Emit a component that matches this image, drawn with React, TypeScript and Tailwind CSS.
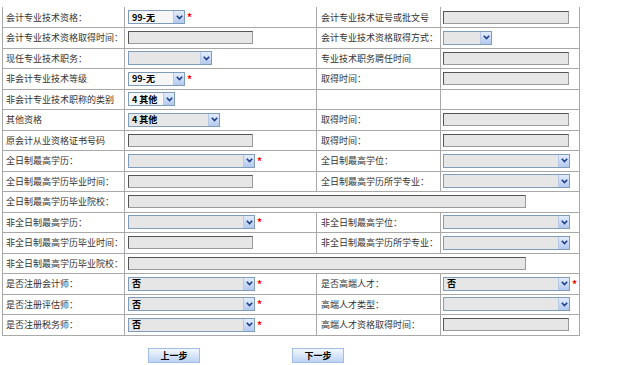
import React from 'react'

const font = { fontFamily: '"Noto Sans CJK SC", "Liberation Sans", sans-serif' }

const Star = () => <span className="ml-[2px] text-[10px] leading-none font-bold text-[#ff0000]">*</span>

const Arrow = () => (
    <span className="flex h-full w-[11px] items-center justify-center border-l border-[#b7c9e6] bg-gradient-to-b from-[#e3ecfb] to-[#b4c9ef]">
        <svg width="7" height="5" viewBox="0 0 7 5">
            <path d="M0.8 0.8 L3.5 3.6 L6.2 0.8" fill="none" stroke="#1d3f8c" strokeWidth="1.6" />
        </svg>
    </span>
)

const Select = ({ w, value, light, star }: { w: string; value?: string; light?: boolean; star?: boolean }) => (
    <div className="flex items-center">
        <div className={`flex h-[14px] items-center justify-between border border-[#7f9db9] ${w} ${light ? 'bg-[#f6f6f6]' : 'bg-[#e6e6e6]'}`}>
            <span className="whitespace-pre pl-[3px] text-[9px] font-bold leading-none text-black">{value}</span>
            <Arrow />
        </div>
        {star && <Star />}
    </div>
)

const Input = ({ w }: { w: string }) => (
    <div className={`h-[13px] border border-[#555] border-r-[#9a9a9a] border-b-[#9a9a9a] bg-[#e6e6e6] ${w}`} />
)

const Label = ({ children, left }: { children?: React.ReactNode; left?: boolean }) => (
    <td className={`h-[20.5px] border border-[#a8a8a8] ${left ? 'pl-[3px]' : 'pl-[4px]'} text-[9px] leading-none text-[#333]`}>
        {children}
    </td>
)

const Field = ({ children, left, span }: { children?: React.ReactNode; left?: boolean; span?: number }) => (
    <td colSpan={span} className={`border border-[#a8a8a8] ${left ? 'pl-[3px]' : 'pl-[2px]'}`}>{children}</td>
)

type Row = [string, React.ReactNode, string?, React.ReactNode?]

const rows: Row[] = [
    ['会计专业技术资格：', <Select w="w-[57px]" value="99-无" light star />, '会计专业技术证号或批文号', <Input w="w-[126px]" />],
    ['会计专业技术资格取得时间：', <Input w="w-[125px]" />, '会计专业技术资格取得方式：', <Select w="w-[49px]" />],
    ['现任专业技术职务：', <Select w="w-[84px]" />, '专业技术职务聘任时间', <Input w="w-[126px]" />],
    ['非会计专业技术等级', <Select w="w-[57px]" value="99-无" light star />, '取得时间：', <Input w="w-[126px]" />],
    ['非会计专业技术职称的类别', <Select w="w-[47px]" value="4 其他" light />, '', null],
    ['其他资格', <Select w="w-[92px]" value="4 其他" />, '取得时间：', <Input w="w-[126px]" />],
    ['原会计从业资格证书号码', <Input w="w-[125px]" />, '取得时间：', <Input w="w-[126px]" />],
    ['全日制最高学历：', <Select w="w-[127px]" star />, '全日制最高学位：', <Select w="w-[127px]" />],
    ['全日制最高学历毕业时间：', <Input w="w-[125px]" />, '全日制最高学历所学专业：', <Select w="w-[127px]" />],
    ['全日制最高学历毕业院校：', <Input w="w-[398px]" />],
    ['非全日制最高学历：', <Select w="w-[127px]" star />, '非全日制最高学位：', <Select w="w-[127px]" />],
    ['非全日制最高学历毕业时间：', <Input w="w-[125px]" />, '非全日制最高学历所学专业：', <Select w="w-[127px]" />],
    ['非全日制最高学历毕业院校：', <Input w="w-[398px]" />],
    ['是否注册会计师：', <Select w="w-[127px]" value="否" star />, '是否高端人才：', <Select w="w-[127px]" value="否" star />],
    ['是否注册评估师：', <Select w="w-[127px]" value="否" star />, '高端人才类型：', <Select w="w-[127px]" />],
    ['是否注册税务师：', <Select w="w-[127px]" value="否" star />, '高端人才资格取得时间：', <Input w="w-[126px]" />],
]

const Button = ({ text }: { text: string }) => (
    <div className="flex h-[15px] w-[52px] items-center justify-center border border-[#9fbde6] bg-gradient-to-b from-[#f4f8ff] to-[#bcd3f2] text-[9px] font-bold leading-none text-black">
        {text}
    </div>
)

export default function App() {
    return (
        <div className="h-[365px] w-[620px] bg-white pl-[2px] pt-[7px]" style={font}>
            <table className="w-[577px] table-fixed border-collapse border-t-0">
                <colgroup>
                    <col className="w-[122px]" />
                    <col className="w-[192px]" />
                    <col className="w-[124px]" />
                    <col className="w-[139px]" />
                </colgroup>
                <tbody>
                    {rows.map((r, i) => (
                        <tr key={i} className={i === 0 ? '[&>td]:border-t-0' : ''}>
                            <Label left>{r[0]}</Label>
                            {r.length === 2 ? (
                                <Field left span={3}>{r[1]}</Field>
                            ) : (
                                <>
                                    <Field left>{r[1]}</Field>
                                    <Label>{r[2]}</Label>
                                    <Field>{r[3]}</Field>
                                </>
                            )}
                        </tr>
                    ))}
                </tbody>
            </table>
            <div className="ml-[146px] mt-[12px] flex gap-[92px]">
                <Button text="上一步" />
                <Button text="下一步" />
            </div>
        </div>
    )
}
